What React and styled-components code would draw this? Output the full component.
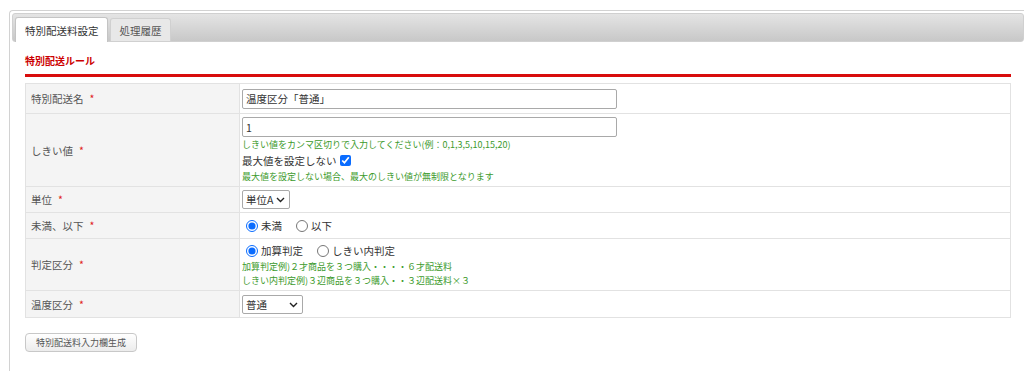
import React from "react";
import styled, { createGlobalStyle } from "styled-components";

const GlobalStyle = createGlobalStyle`
  html, body {
    margin: 0;
    padding: 0;
    background: #ffffff;
  }
  body {
    font-family: "Noto Sans CJK JP", "Noto Sans", sans-serif;
    font-size: 10.5px;
    color: #333;
  }
`;

const rows = [
  { key: "name", label: "特別配送名", height: 30 },
  { key: "threshold", label: "しきい値", height: 72 },
  { key: "unit", label: "単位", height: 26 },
  { key: "under", label: "未満、以下", height: 26 },
  { key: "judge", label: "判定区分", height: 50 },
  { key: "temp", label: "温度区分", height: 27 },
];

const Chevron = () => (
  <ChevronIcon width="9" height="6" viewBox="0 0 9 6">
    <path d="M1 1 L4.5 4.5 L8 1" fill="none" stroke="#222" strokeWidth="1.4" />
  </ChevronIcon>
);

const DropDown = ({ width, value }) => (
  <SelectWrap $width={width}>
    <Select>
      <option>{value}</option>
    </Select>
    <Chevron />
  </SelectWrap>
);

export default function App() {
  const renderField = (key) => {
    switch (key) {
      case "name":
        return <TextInput defaultValue="温度区分「普通」" />;
      case "threshold":
        return (
          <>
            <TextInput defaultValue="1" />
            <Help>しきい値をカンマ区切りで入力してください(例：0,1,3,5,10,15,20)</Help>
            <CheckLine>
              最大値を設定しない
              <CheckBox type="checkbox" defaultChecked />
            </CheckLine>
            <Help>最大値を設定しない場合、最大のしきい値が無制限となります</Help>
          </>
        );
      case "unit":
        return <DropDown width={48} value="単位A" />;
      case "under":
        return (
          <RadioGroup>
            <RadioLabel>
              <Radio type="radio" name="under" defaultChecked />
              未満
            </RadioLabel>
            <RadioLabel>
              <Radio type="radio" name="under" />
              以下
            </RadioLabel>
          </RadioGroup>
        );
      case "judge":
        return (
          <>
            <RadioGroup>
              <RadioLabel>
                <Radio type="radio" name="judge" defaultChecked />
                加算判定
              </RadioLabel>
              <RadioLabel>
                <Radio type="radio" name="judge" />
                しきい内判定
              </RadioLabel>
            </RadioGroup>
            <Help>加算判定例)２才商品を３つ購入・・・・６才配送料</Help>
            <Help>しきい内判定例)３辺商品を３つ購入・・３辺配送料×３</Help>
          </>
        );
      case "temp":
        return <DropDown width={61} value="普通" />;
      default:
        return null;
    }
  };

  return (
    <>
      <GlobalStyle />
      <Page>
        <Panel>
          <TabBar>
            <Tab $active>特別配送料設定</Tab>
            <Tab>処理履歴</Tab>
          </TabBar>
          <Content>
            <SectionTitle>特別配送ルール</SectionTitle>
            <Table>
              <tbody>
                {rows.map((row) => (
                  <tr key={row.key}>
                    <LabelCell style={{ height: row.height }}>
                      {row.label}
                      <Required>*</Required>
                    </LabelCell>
                    <FieldCell>{renderField(row.key)}</FieldCell>
                  </tr>
                ))}
              </tbody>
            </Table>
            <GenerateButton>特別配送料入力欄生成</GenerateButton>
          </Content>
        </Panel>
      </Page>
    </>
  );
}

const Page = styled.div`
  padding: 10px 0 0 9px;
  height: 361px;
  overflow: hidden;
`;

const Panel = styled.div`
  border: 1px solid #d2d2d2;
  border-right: none;
  border-radius: 4px 0 0 0;
  padding: 2px 0 0 2px;
  height: 400px;
`;

const TabBar = styled.div`
  display: flex;
  align-items: flex-end;
  gap: 2px;
  height: 29px;
  padding-left: 2px;
  background: linear-gradient(#e4e4e4, #c8c8c8);
  border: 1px solid #d0d0d0;
  border-radius: 3px;
  box-sizing: border-box;
`;

const Tab = styled.div`
  height: ${(p) => (p.$active ? "25px" : "23px")};
  margin-bottom: ${(p) => (p.$active ? "-1px" : "0")};
  padding: 0 8px 0 9px;
  display: flex;
  align-items: center;
  font-size: 10.5px;
  color: ${(p) => (p.$active ? "#333" : "#555")};
  background: ${(p) => (p.$active ? "#ffffff" : "#e8e8e8")};
  border: 1px solid ${(p) => (p.$active ? "#c4c4c4" : "#d0d0d0")};
  border-bottom: none;
  border-radius: 3px 3px 0 0;
  box-sizing: border-box;
`;

const Content = styled.div`
  padding: 11px 13px 0 13px;
`;

const SectionTitle = styled.div`
  color: #cc0000;
  font-weight: bold;
  font-size: 10px;
  line-height: 16px;
  padding-bottom: 5px;
  border-bottom: 3px solid #d80c0c;
  margin-bottom: 6px;
`;

const Table = styled.table`
  width: 100%;
  border-collapse: collapse;
  border: 1px solid #e2e2e2;
`;

const LabelCell = styled.td`
  width: 214px;
  padding: 0 0 0 5px;
  background: #f4f4f4;
  border: 1px solid #e2e2e2;
  color: #555;
  font-size: 10.5px;
  vertical-align: middle;
  box-sizing: border-box;
`;

const Required = styled.span`
  color: #e02020;
  margin-left: 6px;
`;

const FieldCell = styled.td`
  padding: 3px 2px;
  border: 1px solid #e2e2e2;
  background: #fff;
  vertical-align: middle;
`;

const TextInput = styled.input`
  display: block;
  width: 375px;
  height: 20px;
  box-sizing: border-box;
  border: 1px solid #a9a9a9;
  border-radius: 2px;
  padding: 0 3px;
  font-family: inherit;
  font-size: 10.5px;
  color: #333;
`;

const Help = styled.div`
  color: #3c9a2c;
  font-size: 9px;
  line-height: 13px;
  margin-top: 1px;
`;

const CheckLine = styled.label`
  display: flex;
  align-items: center;
  font-size: 10.5px;
  line-height: 17px;
  margin-top: 1px;
  color: #333;
`;

const CheckBox = styled.input`
  width: 11px;
  height: 11px;
  margin: 0 0 0 3px;
  accent-color: #0a6cff;
`;

const SelectWrap = styled.div`
  position: relative;
  width: ${(p) => p.$width}px;
  height: 19px;
`;

const Select = styled.select`
  appearance: none;
  display: block;
  width: 100%;
  height: 100%;
  box-sizing: border-box;
  border: 1px solid #a9a9a9;
  border-radius: 2px;
  background: #fff;
  font-family: inherit;
  font-size: 10.5px;
  color: #333;
  padding: 0 0 0 3px;
  margin: 0;
`;

const ChevronIcon = styled.svg`
  position: absolute;
  right: 5px;
  top: 7px;
  pointer-events: none;
`;

const RadioGroup = styled.div`
  display: flex;
  gap: 14px;
  padding-left: 4px;
`;

const RadioLabel = styled.label`
  display: flex;
  align-items: center;
  font-size: 10.5px;
  line-height: 17px;
  color: #333;
`;

const Radio = styled.input`
  width: 12px;
  height: 12px;
  margin: 0 3px 0 0;
  accent-color: #0a6cff;
`;

const GenerateButton = styled.button`
  margin-top: 15px;
  height: 19px;
  padding: 0 10px;
  font-family: inherit;
  font-size: 9px;
  color: #555;
  background: linear-gradient(#ffffff, #ececec);
  border: 1px solid #c8c8c8;
  border-radius: 4px;
`;
